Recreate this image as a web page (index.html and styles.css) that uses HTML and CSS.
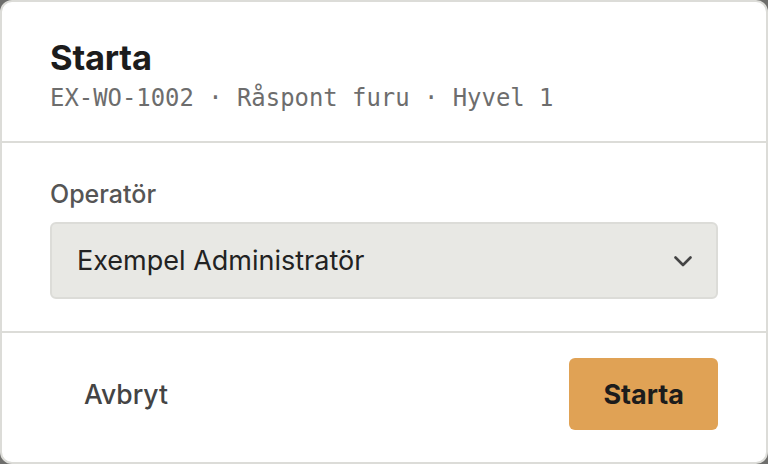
FILE: index.html
```html
<!DOCTYPE html>
<html lang="sv">
<head>
<meta charset="utf-8">
<link rel="stylesheet" href="styles.css">
</head>
<body>
<div class="modal">
  <header class="modal-head">
    <h1 class="title">Starta</h1>
    <div class="subtitle">EX-WO-1002 · Råspont furu · Hyvel 1</div>
  </header>
  <section class="modal-body">
    <label class="label">Operatör</label>
    <div class="select">
      <span class="select-value">Exempel Administratör</span>
      <svg class="chevron" width="18" height="11" viewBox="0 0 18 11"><path d="M1.5 1.5 L9 9 L16.5 1.5" fill="none" stroke="#444" stroke-width="2.6" stroke-linecap="round" stroke-linejoin="round"/></svg>
    </div>
  </section>
  <footer class="modal-foot">
    <button class="btn btn-ghost">Avbryt</button>
    <button class="btn btn-primary">Starta</button>
  </footer>
</div>
</body>
</html>
```
FILE: styles.css
```css
* { box-sizing: border-box; }
html, body { margin: 0; padding: 0; }
body {
  width: 768px;
  height: 464px;
  background: #6e6e6c;
  font-family: "Inter", "Noto Sans", sans-serif;
  overflow: hidden;
}
.modal {
  width: 768px;
  height: 464px;
  background: #fff;
  border: 2px solid #dcdcd8;
  border-radius: 12px;
  display: flex;
  flex-direction: column;
}
.modal-head {
  padding: 36px 48px 0;
  height: 141px;
  border-bottom: 2px solid #dcdcd8;
}
.title {
  margin: 0;
  font-size: 34.5px;
  line-height: 40px;
  font-weight: 700;
  color: #1c1c1c;
  letter-spacing: -0.2px;
}
.subtitle {
  margin-top: 5px;
  font-family: "DejaVu Sans Mono", "Liberation Mono", monospace;
  font-size: 23.9px;
  line-height: 30px;
  color: #6d6d6d;
}
.modal-body {
  padding: 36px 48px 0;
  height: 190px;
  border-bottom: 2px solid #dcdcd8;
  display: flex;
  flex-direction: column;
  gap: 13px;
}
.label {
  font-size: 25px;
  line-height: 30px;
  font-weight: 500;
  color: #555;
}
.select {
  height: 77px;
  background: #e8e8e4;
  border: 2px solid #dcdcd8;
  border-radius: 6px;
  display: flex;
  align-items: center;
  justify-content: space-between;
  padding: 0 24px 0 25px;
}
.select-value {
  font-size: 27px;
  color: #222;
}
.chevron { margin-top: 2px; }
.modal-foot {
  flex: 1;
  padding: 25px 48px 0;
  display: flex;
  justify-content: space-between;
  align-items: flex-start;
}
.btn {
  font-family: inherit;
  height: 72px;
  padding: 0 34px;
  border: none;
  border-radius: 6px;
  font-size: 26.5px;
  background: none;
}
.btn-ghost {
  font-weight: 500;
  color: #444;
}
.btn-primary {
  background: #e0a255;
  font-weight: 700;
  font-size: 27px;
  color: #1c1c1c;
}
```
